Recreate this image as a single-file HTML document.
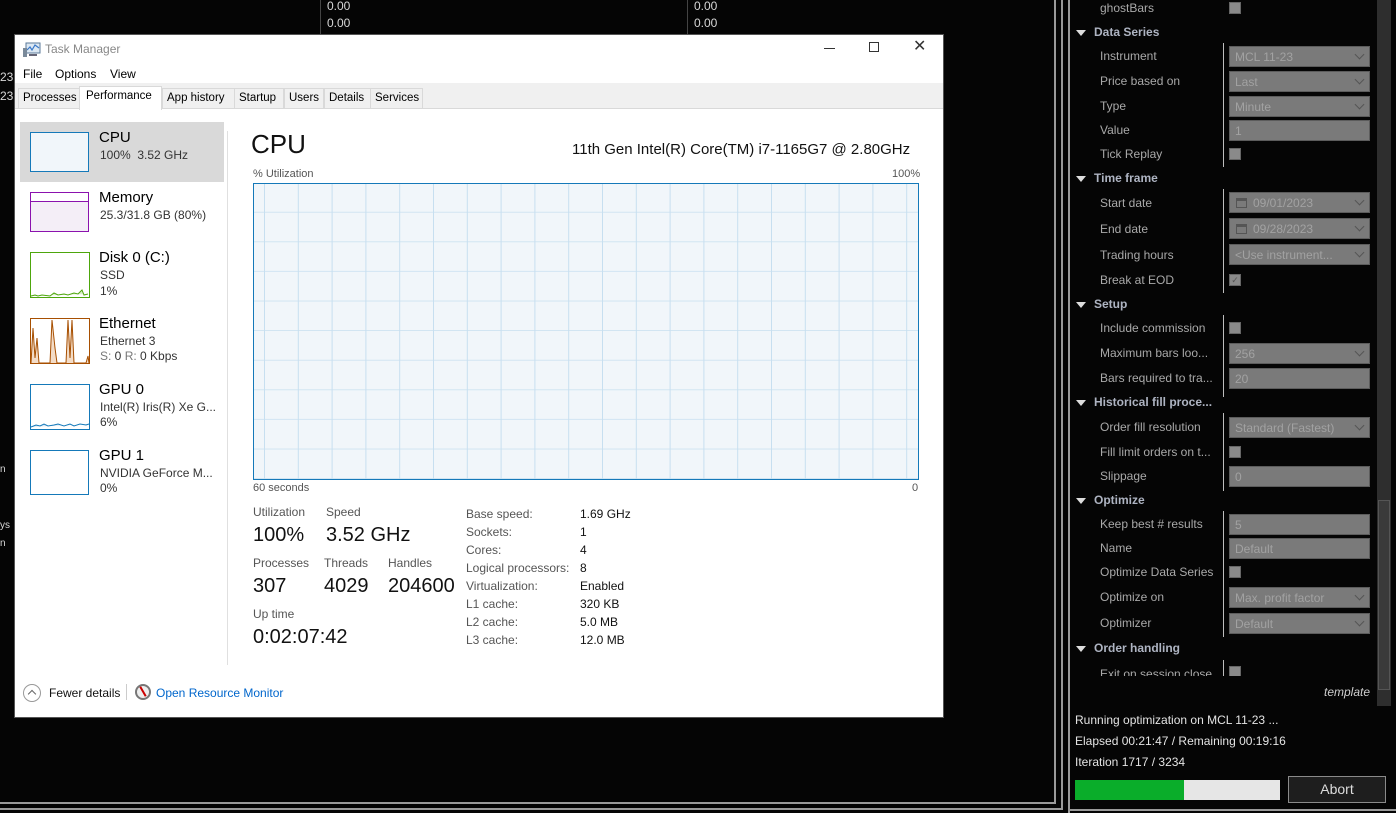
<!DOCTYPE html>
<html><head><meta charset="utf-8"><style>
*{margin:0;padding:0;box-sizing:border-box}
body{width:1396px;height:813px;background:#050505;position:relative;overflow:hidden;font-family:"Liberation Sans",Arial,sans-serif}
.a{position:absolute;white-space:nowrap}
.tm{font-family:"Liberation Sans",sans-serif;color:#000}
.lab{position:absolute;left:1100px;font-size:12px;color:#a9a9a9}
.sec{position:absolute;left:1094px;font-size:12px;font-weight:bold;color:#aeb4c2}
.tri{position:absolute;left:1076px;width:0;height:0;border-left:5px solid transparent;border-right:5px solid transparent;border-top:6px solid #ddd}
.box{position:absolute;left:1229px;width:141px;height:21px;background:#7a7a7a;border:1px solid #5c5c5c;color:#a2a2a2;font-size:12px;padding:3px 5px}
.dd::after{content:"";position:absolute;right:6px;top:4px;width:6px;height:6px;border-right:1.5px solid #555;border-bottom:1.5px solid #555;transform:rotate(45deg)}
.cb{position:absolute;left:1229px;width:12px;height:12px;background:#8a8a8a;border:1px solid #666}
.dv{position:absolute;left:1223px;width:1px;background:#bdbdbd}
.w{color:#d8d8d8;font-size:12px}
.sl{font-size:12px;color:#333}
.big{font-size:20px;color:#111}
.gray{font-size:12px;color:#555}
.tab{position:absolute;top:53px;height:21px;background:#f0f0f0;border:1px solid #d9d9d9;font-size:11.5px;padding:3px 0 0 4px}
</style></head><body>
<div class="a" style="left:320px;top:0;width:1px;height:35px;background:#444"></div>
<div class="a" style="left:687px;top:0;width:1px;height:35px;background:#444"></div>
<div class="a w" style="left:327px;top:-1px">0.00</div>
<div class="a w" style="left:327px;top:16px">0.00</div>
<div class="a w" style="left:694px;top:-1px">0.00</div>
<div class="a w" style="left:694px;top:16px">0.00</div>
<div class="a w" style="left:0;top:70px">23</div>
<div class="a w" style="left:0;top:89px">23</div>
<div class="a w" style="left:0;top:464px;font-size:10px">n</div>
<div class="a w" style="left:0;top:520px;font-size:10px">ys</div>
<div class="a w" style="left:0;top:538px;font-size:10px">n</div>
<div class="a" style="left:1054px;top:0;width:2px;height:804px;background:#9a9a9a"></div>
<div class="a" style="left:0;top:802px;width:1056px;height:2px;background:#9a9a9a"></div>
<div class="a" style="left:1061px;top:0;width:2px;height:810px;background:#9a9a9a"></div>
<div class="a" style="left:0;top:808px;width:1063px;height:2px;background:#9a9a9a"></div>
<div class="a" style="left:1068px;top:0;width:2px;height:813px;background:#9a9a9a"></div>
<div class="a" style="left:1068px;top:809px;width:328px;height:2px;background:#9a9a9a"></div>
<div class="a" style="left:1377px;top:0;width:14px;height:706px;background:#2e2e2e"></div>
<div class="a" style="left:1378px;top:500px;width:12px;height:190px;background:#3a3a3a;border:1px solid #555"></div>

<div class="lab" style="top:1px">ghostBars</div><div class="cb" style="top:2px"></div>
<div class="tri" style="top:30px"></div><div class="sec" style="top:25px">Data Series</div>
<div class="dv" style="top:43px;height:124px"></div>
<div class="lab" style="top:49px">Instrument</div><div class="box dd" style="top:46px">MCL 11-23</div>
<div class="lab" style="top:74px">Price based on</div><div class="box dd" style="top:71px">Last</div>
<div class="lab" style="top:99px">Type</div><div class="box dd" style="top:96px">Minute</div>
<div class="lab" style="top:123px">Value</div><div class="box" style="top:120px">1</div>
<div class="lab" style="top:147px">Tick Replay</div><div class="cb" style="top:148px"></div>
<div class="tri" style="top:176px"></div><div class="sec" style="top:171px">Time frame</div>
<div class="dv" style="top:189px;height:104px"></div>
<div class="lab" style="top:196px">Start date</div><div class="box dd" style="top:192px;padding-left:23px">09/01/2023</div>
<div class="lab" style="top:222px">End date</div><div class="box dd" style="top:218px;padding-left:23px">09/28/2023</div>
<div class="a" style="left:1236px;top:198px;width:11px;height:10px;border:1px solid #555;border-top-width:3px"></div>
<div class="a" style="left:1236px;top:224px;width:11px;height:10px;border:1px solid #555;border-top-width:3px"></div>
<div class="lab" style="top:248px">Trading hours</div><div class="box dd" style="top:244px">&lt;Use instrument...</div>
<div class="lab" style="top:273px">Break at EOD</div><div class="cb" style="top:274px;font-size:9px;color:#555;line-height:10px;text-align:center">✓</div>
<div class="tri" style="top:302px"></div><div class="sec" style="top:297px">Setup</div>
<div class="dv" style="top:315px;height:82px"></div>
<div class="lab" style="top:321px">Include commission</div><div class="cb" style="top:322px"></div>
<div class="lab" style="top:346px">Maximum bars loo...</div><div class="box dd" style="top:343px">256</div>
<div class="lab" style="top:371px">Bars required to tra...</div><div class="box" style="top:368px">20</div>
<div class="tri" style="top:400px"></div><div class="sec" style="top:395px">Historical fill proce...</div>
<div class="dv" style="top:413px;height:78px"></div>
<div class="lab" style="top:420px">Order fill resolution</div><div class="box dd" style="top:417px">Standard (Fastest)</div>
<div class="lab" style="top:445px">Fill limit orders on t...</div><div class="cb" style="top:446px"></div>
<div class="lab" style="top:469px">Slippage</div><div class="box" style="top:466px">0</div>
<div class="tri" style="top:498px"></div><div class="sec" style="top:493px">Optimize</div>
<div class="dv" style="top:511px;height:126px"></div>
<div class="lab" style="top:517px">Keep best # results</div><div class="box" style="top:514px">5</div>
<div class="lab" style="top:541px">Name</div><div class="box" style="top:538px">Default</div>
<div class="lab" style="top:565px">Optimize Data Series</div><div class="cb" style="top:566px"></div>
<div class="lab" style="top:590px">Optimize on</div><div class="box dd" style="top:587px">Max. profit factor</div>
<div class="lab" style="top:616px">Optimizer</div><div class="box dd" style="top:613px">Default</div>
<div class="tri" style="top:646px"></div><div class="sec" style="top:641px">Order handling</div>
<div class="a" style="left:1070px;top:660px;width:306px;height:16px;overflow:hidden">
 <div class="lab" style="left:30px;top:7px">Exit on session close</div><div class="cb" style="left:159px;top:6px"></div>
 <div class="dv" style="left:153px;top:0;height:16px"></div>
</div>
<div class="a" style="left:1324px;top:685px;font-size:12px;font-style:italic;color:#cfcfcf">template</div>
<div class="a" style="left:1075px;top:713px;font-size:12px;color:#e4e4e4">Running optimization on MCL 11-23 ...</div>
<div class="a" style="left:1075px;top:734px;font-size:12px;color:#e4e4e4">Elapsed 00:21:47 / Remaining 00:19:16</div>
<div class="a" style="left:1075px;top:755px;font-size:12px;color:#e4e4e4">Iteration 1717 / 3234</div>
<div class="a" style="left:1075px;top:780px;width:205px;height:20px;background:#e6e6e6"></div>
<div class="a" style="left:1075px;top:780px;width:109px;height:20px;background:#0aad2a"></div>
<div class="a" style="left:1288px;top:776px;width:98px;height:27px;background:#1e1e1e;border:1px solid #8a8a8a;color:#ddd;font-size:14px;text-align:center;line-height:25px">Abort</div>

<div class="a tm" style="left:14px;top:34px;width:930px;height:684px;background:#fff;border:1px solid #555">
 <svg class="a" style="left:8px;top:7px" width="18" height="16" viewBox="0 0 18 16"><rect x="3" y="1" width="14" height="10" fill="#dce8f3" stroke="#5b7a99"/><polyline points="4,8 7,5 9,8 12,3 16,6" fill="none" stroke="#3a78c8" stroke-width="1.2"/><rect x="0" y="6" width="4" height="9" fill="#7a8a9a"/><rect x="6" y="12" width="8" height="2" fill="#667"/></svg>
 <div class="a" style="left:30px;top:7px;font-size:12px;color:#888">Task Manager</div>
 <div class="a" style="left:809px;top:13px;width:11px;height:1px;background:#333"></div>
 <div class="a" style="left:854px;top:7px;width:10px;height:10px;border:1px solid #333"></div>
 <div class="a" style="left:898px;top:6px;font-size:16px;color:#333;line-height:12px">✕</div>
 <div class="a" style="left:8px;top:32px;font-size:12px">File</div>
 <div class="a" style="left:40px;top:32px;font-size:12px">Options</div>
 <div class="a" style="left:95px;top:32px;font-size:12px">View</div>
 <div class="a" style="left:0;top:48px;width:928px;height:26px;background:#f0f0f0"></div>
 <div class="a" style="left:0;top:73px;width:928px;height:1px;background:#d9d9d9"></div>
 <div class="tab" style="left:3px;width:64px">Processes</div>
 <div class="a" style="left:64px;top:51px;width:83px;height:24px;background:#fff;border:1px solid #d9d9d9;border-bottom:none;font-size:11.5px;padding:3px 0 0 6px">Performance</div>
 <div class="tab" style="left:147px;width:73px">App history</div>
 <div class="tab" style="left:219px;width:50px">Startup</div>
 <div class="tab" style="left:269px;width:40px">Users</div>
 <div class="tab" style="left:309px;width:47px">Details</div>
 <div class="tab" style="left:355px;width:53px">Services</div>

 <div class="a" style="left:5px;top:87px;width:204px;height:60px;background:#d9d9d9"></div>
 <div class="a" style="left:212px;top:96px;width:1px;height:534px;background:#e0e0e0"></div>
 <div class="a" style="left:15px;top:97px;width:59px;height:40px;background:#f1f6fa;border:1px solid #1579b9"></div>
 <div class="a" style="left:84px;top:94px;font-size:15px">CPU</div>
 <div class="a sl" style="left:85px;top:113px">100%&nbsp; 3.52 GHz</div>
 <div class="a" style="left:15px;top:157px;width:59px;height:40px;background:#fff;border:1px solid #8b12ae"><div style="position:absolute;left:0;right:0;bottom:0;height:30px;background:#f4eef7;border-top:1px solid #8b12ae"></div></div>
 <div class="a" style="left:84px;top:154px;font-size:15px">Memory</div>
 <div class="a sl" style="left:85px;top:173px">25.3/31.8 GB (80%)</div>
 <svg class="a" style="left:15px;top:217px" width="60" height="46"><rect x="0.5" y="0.5" width="59" height="45" fill="#fff" stroke="#4da60c"/><polyline points="1,44 5,43 8,44 12,43 20,44 24,41 28,43 34,42 38,43 44,41 48,42 52,38 54,43 58,42" fill="#d9edc8" stroke="#4da60c"/></svg>
 <div class="a" style="left:84px;top:214px;font-size:15px">Disk 0 (C:)</div>
 <div class="a sl" style="left:85px;top:233px">SSD</div>
 <div class="a sl" style="left:85px;top:249px">1%</div>
 <svg class="a" style="left:15px;top:283px" width="60" height="46"><rect x="0.5" y="0.5" width="59" height="45" fill="#fff" stroke="#a74f01"/><polyline points="1,45 3,10 5,40 7,20 9,45 20,45 22,2 25,30 27,45 36,45 38,2 40,40 42,2 44,45 56,45 58,38 59,45" fill="#f3dcc7" stroke="#a74f01"/></svg>
 <div class="a" style="left:84px;top:280px;font-size:15px">Ethernet</div>
 <div class="a sl" style="left:85px;top:299px">Ethernet 3</div>
 <div class="a sl" style="left:85px;top:314px"><span style="color:#777">S:</span> 0 <span style="color:#777">R:</span> 0 Kbps</div>
 <svg class="a" style="left:15px;top:349px" width="60" height="46"><rect x="0.5" y="0.5" width="59" height="45" fill="#fff" stroke="#1579b9"/><polyline points="1,43 6,41 10,42 14,40 18,42 24,41 28,40 34,42 40,40 44,42 50,40 56,41 59,40" fill="#dbe9f5" stroke="#1579b9"/></svg>
 <div class="a" style="left:84px;top:346px;font-size:15px">GPU 0</div>
 <div class="a sl" style="left:85px;top:365px">Intel(R) Iris(R) Xe G...</div>
 <div class="a sl" style="left:85px;top:380px">6%</div>
 <div class="a" style="left:15px;top:415px;width:59px;height:45px;background:#fff;border:1px solid #1579b9"></div>
 <div class="a" style="left:84px;top:412px;font-size:15px">GPU 1</div>
 <div class="a sl" style="left:85px;top:431px">NVIDIA GeForce M...</div>
 <div class="a sl" style="left:85px;top:446px">0%</div>

 <div class="a" style="left:236px;top:94px;font-size:26px;color:#111">CPU</div>
 <div class="a" style="left:557px;top:106px;font-size:15px;color:#111">11th Gen Intel(R) Core(TM) i7-1165G7 @ 2.80GHz</div>
 <div class="a gray" style="left:238px;top:133px;font-size:11px">% Utilization</div>
 <div class="a gray" style="left:877px;top:133px;font-size:11px">100%</div>
 <svg class="a" style="left:238px;top:148px" width="666" height="297">
  <defs><pattern id="g" patternUnits="userSpaceOnUse" x="11" y="0" width="33.8" height="29.6"><path d="M0.5 0V29.6M0 29.3H33.8" stroke="#c7dff0" fill="none"/></pattern></defs>
  <rect x="0" y="0" width="666" height="297" fill="#f1f6fa"/>
  <rect x="0" y="0" width="666" height="297" fill="url(#g)"/>
  <rect x="0.5" y="0.5" width="665" height="296" fill="none" stroke="#1579b9"/>
 </svg>
 <div class="a gray" style="left:238px;top:447px;font-size:11px">60 seconds</div>
 <div class="a gray" style="left:897px;top:447px;font-size:11px">0</div>
 <div class="a gray" style="left:238px;top:470px">Utilization</div>
 <div class="a gray" style="left:311px;top:470px">Speed</div>
 <div class="a big" style="left:238px;top:489px">100%</div>
 <div class="a big" style="left:311px;top:489px">3.52 GHz</div>
 <div class="a gray" style="left:238px;top:521px">Processes</div>
 <div class="a gray" style="left:309px;top:521px">Threads</div>
 <div class="a gray" style="left:373px;top:521px">Handles</div>
 <div class="a big" style="left:238px;top:540px">307</div>
 <div class="a big" style="left:309px;top:540px">4029</div>
 <div class="a big" style="left:373px;top:540px">204600</div>
 <div class="a gray" style="left:238px;top:572px">Up time</div>
 <div class="a big" style="left:238px;top:591px">0:02:07:42</div>
 <div class="a gray" style="left:451px;top:470px;line-height:18px">Base speed:<br>Sockets:<br>Cores:<br>Logical processors:<br>Virtualization:<br>L1 cache:<br>L2 cache:<br>L3 cache:</div>
 <div class="a" style="left:565px;top:470px;line-height:18px;font-size:12px;color:#111">1.69 GHz<br>1<br>4<br>8<br>Enabled<br>320 KB<br>5.0 MB<br>12.0 MB</div>

 <div class="a" style="left:8px;top:649px;width:18px;height:18px;border:1px solid #999;border-radius:50%"></div>
 <div class="a" style="left:14px;top:656px;width:6px;height:6px;border-left:1px solid #666;border-top:1px solid #666;transform:rotate(45deg)"></div>
 <div class="a" style="left:34px;top:651px;font-size:12px;color:#111">Fewer details</div>
 <div class="a" style="left:111px;top:649px;width:1px;height:16px;background:#ccc"></div>
 <div class="a" style="left:120px;top:649px;width:16px;height:16px;border:2px solid #777;border-radius:50%;background:#eee"></div>
 <div class="a" style="left:127px;top:651px;width:2px;height:11px;background:#c00;transform:rotate(-30deg)"></div>
 <div class="a" style="left:141px;top:651px;font-size:12px;color:#0066cc">Open Resource Monitor</div>
</div>
</body></html>
